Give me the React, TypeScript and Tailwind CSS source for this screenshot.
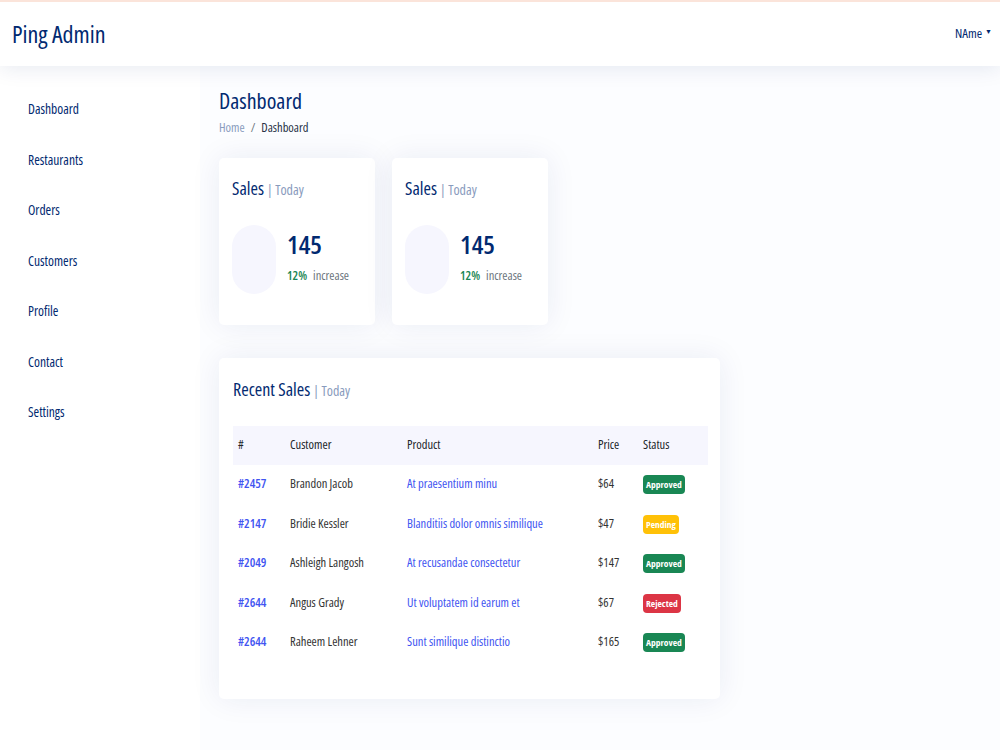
const font = { fontFamily: '"Open Sans", "Noto Sans", "Liberation Sans", sans-serif' };

const navItems = ["Dashboard", "Restaurants", "Orders", "Customers", "Profile", "Contact", "Settings"];

type Sale = { id: string; customer: string; product: string; price: string; status: "Approved" | "Pending" | "Rejected" };

const sales: Sale[] = [
  { id: "#2457", customer: "Brandon Jacob", product: "At praesentium minu", price: "$64", status: "Approved" },
  { id: "#2147", customer: "Bridie Kessler", product: "Blanditiis dolor omnis similique", price: "$47", status: "Pending" },
  { id: "#2049", customer: "Ashleigh Langosh", product: "At recusandae consectetur", price: "$147", status: "Approved" },
  { id: "#2644", customer: "Angus Grady", product: "Ut voluptatem id earum et", price: "$67", status: "Rejected" },
  { id: "#2644", customer: "Raheem Lehner", product: "Sunt similique distinctio", price: "$165", status: "Approved" },
];

const badgeClass: Record<Sale["status"], string> = {
  Approved: "bg-[#198754]",
  Pending: "bg-[#ffc107]",
  Rejected: "bg-[#dc3545]",
};

function StatCard() {
  return (
    <div className="w-[156px] h-[167px] bg-white rounded-[5px] shadow-[0_0_30px_rgba(1,41,112,0.08)] px-[13px] pt-[17px]">
      <div className="flex items-baseline gap-[3px]">
        <span className="text-[18px] text-[#012970]">Sales</span>
        <span className="text-[14px] text-[#899bbd]">| Today</span>
      </div>
      <div className="flex items-center mt-[23px]">
        <div className="w-[44px] h-[69px] rounded-full bg-[#f6f6fe]" />
        <div className="ml-[11px] -mt-[5px]">
          <div className="text-[26px] font-semibold text-[#012970] leading-[32px]">145</div>
          <div className="text-[12.5px] mt-[7px]">
            <span className="text-[#198754] font-semibold">12%</span>
            <span className="text-[#6c757d] ml-[6px]">increase</span>
          </div>
        </div>
      </div>
    </div>
  );
}

export default function App() {
  return (
    <div className="min-h-[750px] bg-white flex flex-col font-stretch-condensed" style={font}>
      <header className="h-[66px] border-t-2 border-[#fbe4da] bg-white flex items-center justify-between pl-[12px] pr-[8px] shadow-[0_2px_20px_rgba(1,41,112,0.1)] relative z-10">
        <span className="text-[24px] font-medium text-[#012970]">Ping Admin</span>
        <span className="text-[13px] text-[#012970] flex items-center gap-[3px]">
          NAme
          <span className="text-[7px] -mt-[4px]">▼</span>
        </span>
      </header>
      <div className="flex flex-1">
        <aside className="w-[200px] bg-white shadow-[0_0_20px_rgba(1,41,112,0.1)] pt-[18px] h-[684px]">
          {navItems.map((item) => (
            <div key={item} className="h-[50.5px] flex items-center pl-[28px] text-[13.5px] text-[#012970]">
              {item}
            </div>
          ))}
        </aside>
        <main className="flex-1 bg-[#fcfdff] pl-[19px] pt-[18px]">
          <h1 className="text-[22px] text-[#012970] leading-[32px]">Dashboard</h1>
          <div className="text-[12.5px] mt-[3px] flex gap-[6px]">
            <span className="text-[#899bbd]">Home</span>
            <span className="text-[#6c757d]">/</span>
            <span className="text-[#273246]">Dashboard</span>
          </div>
          <div className="flex gap-[17px] mt-[20px]">
            <StatCard />
            <StatCard />
          </div>
          <div className="w-[501px] h-[341px] bg-white rounded-[5px] shadow-[0_0_30px_rgba(1,41,112,0.08)] mt-[33px] pl-[14px] pr-[12px] pt-[18px]">
            <div className="flex items-baseline gap-[3px]">
              <span className="text-[18px] text-[#012970]">Recent Sales</span>
              <span className="text-[14px] text-[#899bbd]">| Today</span>
            </div>
            <table className="w-full mt-[23px] text-[12.5px] text-[#212529]">
              <thead>
                <tr className="bg-[#f6f6fe] h-[39px]">
                  <th className="text-left font-medium pl-[5px] w-[57px]">#</th>
                  <th className="text-left font-medium w-[117px]">Customer</th>
                  <th className="text-left font-medium w-[191px]">Product</th>
                  <th className="text-left font-medium w-[45px]">Price</th>
                  <th className="text-left font-medium">Status</th>
                </tr>
              </thead>
              <tbody>
                {sales.map((s, i) => (
                  <tr key={i} className="h-[39.5px]">
                    <td className="pl-[5px] text-[#4154f1] font-semibold">{s.id}</td>
                    <td className="text-[#333]">{s.customer}</td>
                    <td className="text-[#4154f1]">{s.product}</td>
                    <td className="text-[#333]">{s.price}</td>
                    <td>
                      <span className={`inline-block ${badgeClass[s.status]} text-white text-[9.5px] font-bold rounded-[4px] px-[3px] leading-[19px]`}>
                        {s.status}
                      </span>
                    </td>
                  </tr>
                ))}
              </tbody>
            </table>
          </div>
        </main>
      </div>
    </div>
  );
}
